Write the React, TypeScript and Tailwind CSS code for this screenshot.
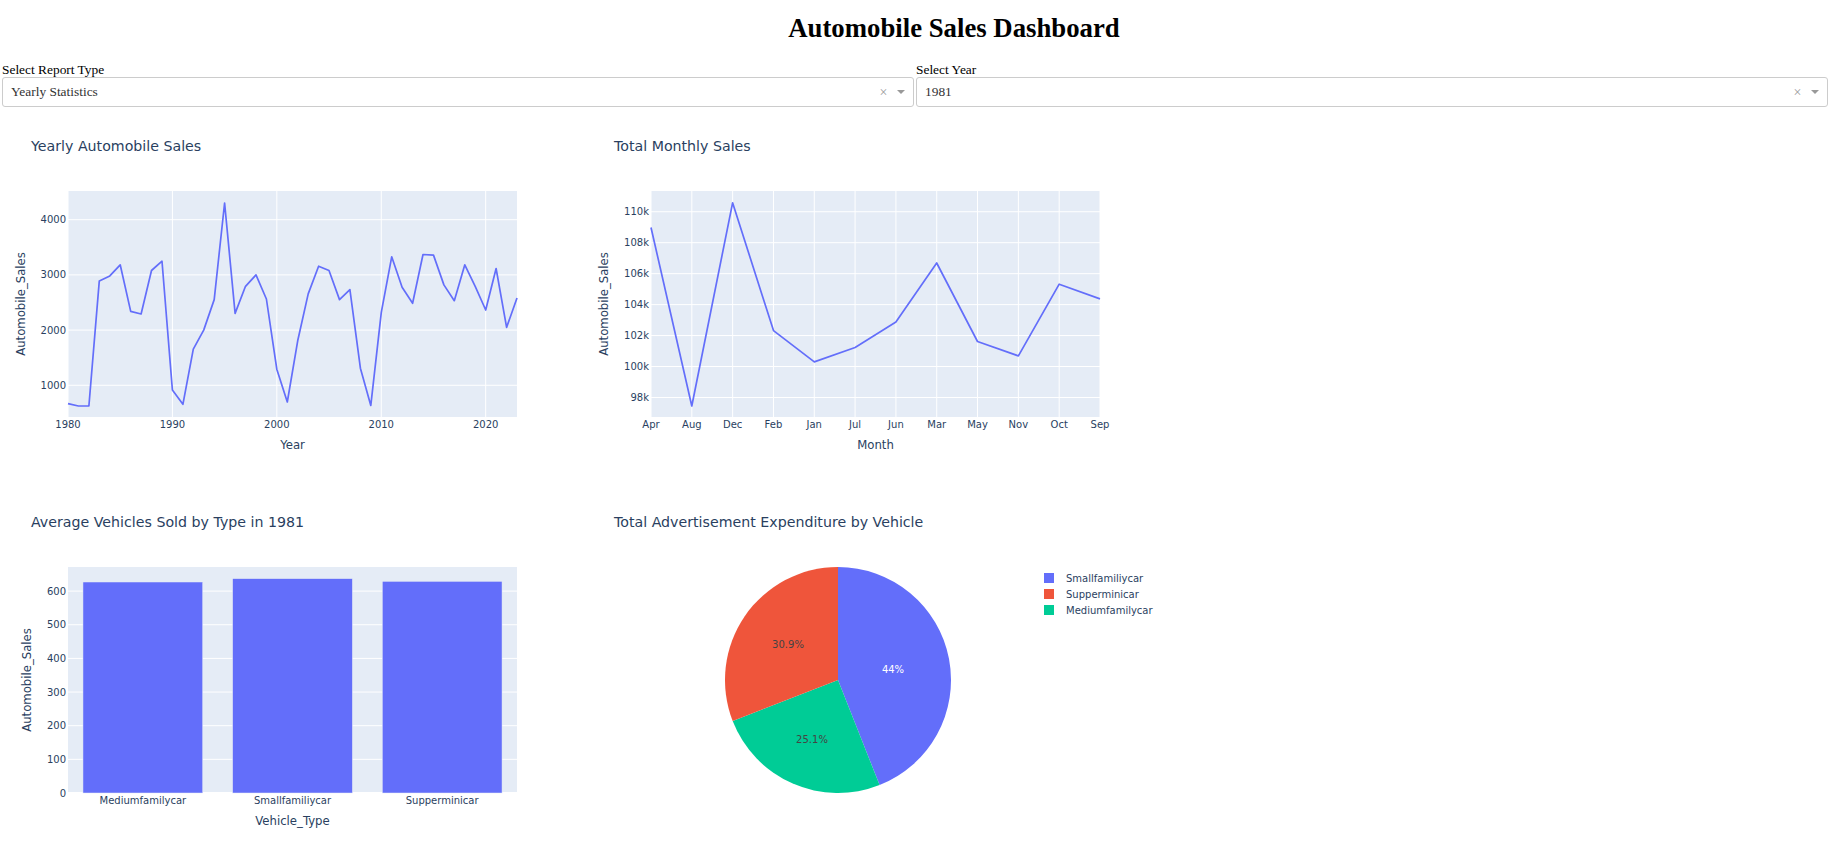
import React from "react";

type Tick = { at: number; label: string };

// plotly-like figure geometry (700x450 figure rendered at ~0.836)
const W = 583;
const H = 376;
const L = 68;
const R = 517;
const T = 84;
const B = 310;
const INK = "#2a3f5f";

const yearly = [
  667, 624, 624, 2891, 2982, 3182, 2339, 2291, 3079, 3248, 915, 655, 1655, 2000, 2552, 4303, 2303, 2794, 3000, 2564,
  1291, 697, 1806, 2655, 3158, 3079, 2552, 2733, 1309, 636, 2321, 3327, 2776, 2485, 3370, 3358, 2818, 2533, 3182,
  2794, 2364, 3115, 2048, 2582,
];

const months = ["Apr", "Aug", "Dec", "Feb", "Jan", "Jul", "Jun", "Mar", "May", "Nov", "Oct", "Sep"];
const monthly = [108.98, 97.45, 110.58, 102.32, 100.3, 101.23, 102.88, 106.69, 101.62, 100.69, 105.32, 104.37];

const bars = [
  { name: "Mediumfamilycar", value: 627 },
  { name: "Smallfamiliycar", value: 637 },
  { name: "Supperminicar", value: 629 },
];

// legend order
const slices = [
  { name: "Smallfamiliycar", color: "#636efa" },
  { name: "Supperminicar", color: "#ef553b" },
  { name: "Mediumfamilycar", color: "#00cc96" },
];

// drawing order, clockwise from 12 o'clock
const wedges = [
  { name: "Smallfamiliycar", pct: 44, color: "#636efa", text: "44%", ink: "#fff", lx: 55, ly: -11 },
  { name: "Mediumfamilycar", pct: 25.1, color: "#00cc96", text: "25.1%", ink: "#444", lx: -26, ly: 59 },
  { name: "Supperminicar", pct: 30.9, color: "#ef553b", text: "30.9%", ink: "#444", lx: -50, ly: -36 },
];

const Figure = ({
  title,
  xTitle,
  yTitle,
  yTitleX,
  xTicks,
  yTicks,
  vGrid,
  children,
}: {
  title: string;
  xTitle: string;
  yTitle: string;
  yTitleX: number;
  xTicks: Tick[];
  yTicks: Tick[];
  vGrid: boolean;
  children: React.ReactNode;
}) => {
  return (
    <svg width={W} height={H} className="block shrink-0 font-['DejaVu_Sans',verdana,sans-serif]">
      <text x={31} y={44} fontSize={14.2} fill={INK}>
        {title}
      </text>
      <rect x={L} y={T} width={R - L} height={B - T} fill="#e5ecf6" />
      {vGrid &&
        xTicks.map((t) => <line key={t.label} x1={t.at} x2={t.at} y1={T} y2={B} stroke="#fff" strokeWidth={1} />)}
      {yTicks.map((t) => (
        <line key={t.label} x1={L} x2={R} y1={t.at} y2={t.at} stroke="#fff" strokeWidth={1} />
      ))}
      {children}
      {xTicks.map((t) => (
        <text key={t.label} x={t.at} y={B + 11} fontSize={10} fill={INK} textAnchor="middle">
          {t.label}
        </text>
      ))}
      {yTicks.map((t) => (
        <text key={t.label} x={L - 2} y={t.at + 3.5} fontSize={10} fill={INK} textAnchor="end">
          {t.label}
        </text>
      ))}
      <text x={(L + R) / 2} y={B + 32} fontSize={11.7} fill={INK} textAnchor="middle">
        {xTitle}
      </text>
      <text
        transform={`translate(${yTitleX},${(T + B) / 2}) rotate(-90)`}
        fontSize={11.7}
        fill={INK}
        textAnchor="middle"
      >
        {yTitle}
      </text>
    </svg>
  );
};

const YearlyChart = () => {
  const lo = 425;
  const hi = 4520;
  const x = (yr: number) => L + ((yr - 1980) / 43) * (R - L);
  const y = (v: number) => B - ((v - lo) / (hi - lo)) * (B - T);
  const pts = yearly.map((v, i) => `${x(1980 + i).toFixed(1)},${y(v).toFixed(1)}`).join(" ");
  return (
    <Figure
      title="Yearly Automobile Sales"
      xTitle="Year"
      yTitle="Automobile_Sales"
      yTitleX={25}
      vGrid
      xTicks={[1980, 1990, 2000, 2010, 2020].map((v) => ({ at: x(v), label: String(v) }))}
      yTicks={[1000, 2000, 3000, 4000].map((v) => ({ at: y(v), label: String(v) }))}
    >
      <polyline points={pts} fill="none" stroke="#636efa" strokeWidth={1.7} strokeLinejoin="round" />
    </Figure>
  );
};

const MonthlyChart = () => {
  const lo = 96.74;
  const hi = 111.34;
  const x = (i: number) => L + (i / 11) * (R - L);
  const y = (v: number) => B - ((v - lo) / (hi - lo)) * (B - T);
  const pts = monthly.map((v, i) => `${x(i).toFixed(1)},${y(v).toFixed(1)}`).join(" ");
  return (
    <Figure
      title="Total Monthly Sales"
      xTitle="Month"
      yTitle="Automobile_Sales"
      yTitleX={25}
      vGrid
      xTicks={months.map((m, i) => ({ at: x(i), label: m }))}
      yTicks={[98, 100, 102, 104, 106, 108, 110].map((v) => ({ at: y(v), label: `${v}k` }))}
    >
      <polyline points={pts} fill="none" stroke="#636efa" strokeWidth={1.7} strokeLinejoin="round" />
    </Figure>
  );
};

const BarChart = () => {
  const hi = 671.6;
  const y = (v: number) => B - (v / hi) * (B - T);
  const band = (R - L) / 3;
  return (
    <Figure
      title="Average Vehicles Sold by Type in 1981"
      xTitle="Vehicle_Type"
      yTitle="Automobile_Sales"
      yTitleX={31}
      vGrid={false}
      xTicks={bars.map((b, i) => ({ at: L + band * (i + 0.5), label: b.name }))}
      yTicks={[0, 100, 200, 300, 400, 500, 600].map((v) => ({ at: y(v), label: String(v) }))}
    >
      <line x1={L} x2={R} y1={B} y2={B} stroke="#fff" strokeWidth={2} />
      {bars.map((b, i) => (
        <rect
          key={b.name}
          x={L + band * i + band * 0.1}
          y={y(b.value)}
          width={band * 0.8}
          height={B - y(b.value)}
          fill="#636efa"
          stroke="#e5ecf6"
          strokeWidth={0.5}
        />
      ))}
    </Figure>
  );
};

const PieChart = () => {
  const cx = 255;
  const cy = 197;
  const r = 113;
  let start = 0;
  const arcs = wedges.map((s) => {
    const a0 = (start / 100) * Math.PI * 2;
    start += s.pct;
    const a1 = (start / 100) * Math.PI * 2;
    const large = a1 - a0 > Math.PI ? 1 : 0;
    const p0 = [cx + r * Math.sin(a0), cy - r * Math.cos(a0)];
    const p1 = [cx + r * Math.sin(a1), cy - r * Math.cos(a1)];
    return { ...s, d: `M${cx},${cy} L${p0[0]},${p0[1]} A${r},${r} 0 ${large} 1 ${p1[0]},${p1[1]} Z` };
  });
  return (
    <svg width={W} height={H} className="block shrink-0 font-['DejaVu_Sans',verdana,sans-serif]">
      <text x={31} y={44} fontSize={14.2} fill={INK}>
        Total Advertisement Expenditure by Vehicle
      </text>
      {arcs.map((a) => (
        <path key={a.name} d={a.d} fill={a.color} />
      ))}
      {arcs.map((a) => (
        <text key={a.name} x={cx + a.lx} y={cy + a.ly + 3.5} fontSize={10} fill={a.ink} textAnchor="middle">
          {a.text}
        </text>
      ))}
      {slices.map((s, i) => (
        <g key={s.name}>
          <rect x={461} y={90 + i * 16} width={10} height={10} fill={s.color} />
          <text x={483} y={98.5 + i * 16} fontSize={10} fill={INK}>
            {s.name}
          </text>
        </g>
      ))}
    </svg>
  );
};

const Select = ({ label, value }: { label: string; value: string }) => {
  return (
    <div className="w-1/2 pl-[2px]">
      <label className="block text-[13.4px] leading-[15.4px] text-black">{label}</label>
      <div className="flex h-[30px] items-center rounded-[3px] border border-[#ccc] bg-white pl-[8px] pr-[4px] text-[13.4px] text-[#333]">
        <span className="flex-1">{value}</span>
        <span className="w-[17px] text-center text-[14px] text-[#999]">×</span>
        <span className="flex w-[17px] justify-center">
          <span className="border-x-[4px] border-t-[4px] border-x-transparent border-t-[#999]" />
        </span>
      </div>
    </div>
  );
};

const App = () => {
  return (
    <div className="w-full bg-white font-['Liberation_Serif','Times_New_Roman',serif]">
      <h1 className="mt-[13px] mb-[18px] pl-[80px] text-center text-[26.75px] font-bold leading-[30.8px] text-black">
        Automobile Sales Dashboard
      </h1>
      <div className="flex">
        <Select label="Select Report Type" value="Yearly Statistics" />
        <Select label="Select Year" value="1981" />
      </div>
      <div className="flex">
        <YearlyChart />
        <MonthlyChart />
      </div>
      <div className="flex">
        <BarChart />
        <PieChart />
      </div>
    </div>
  );
};

export default App;
